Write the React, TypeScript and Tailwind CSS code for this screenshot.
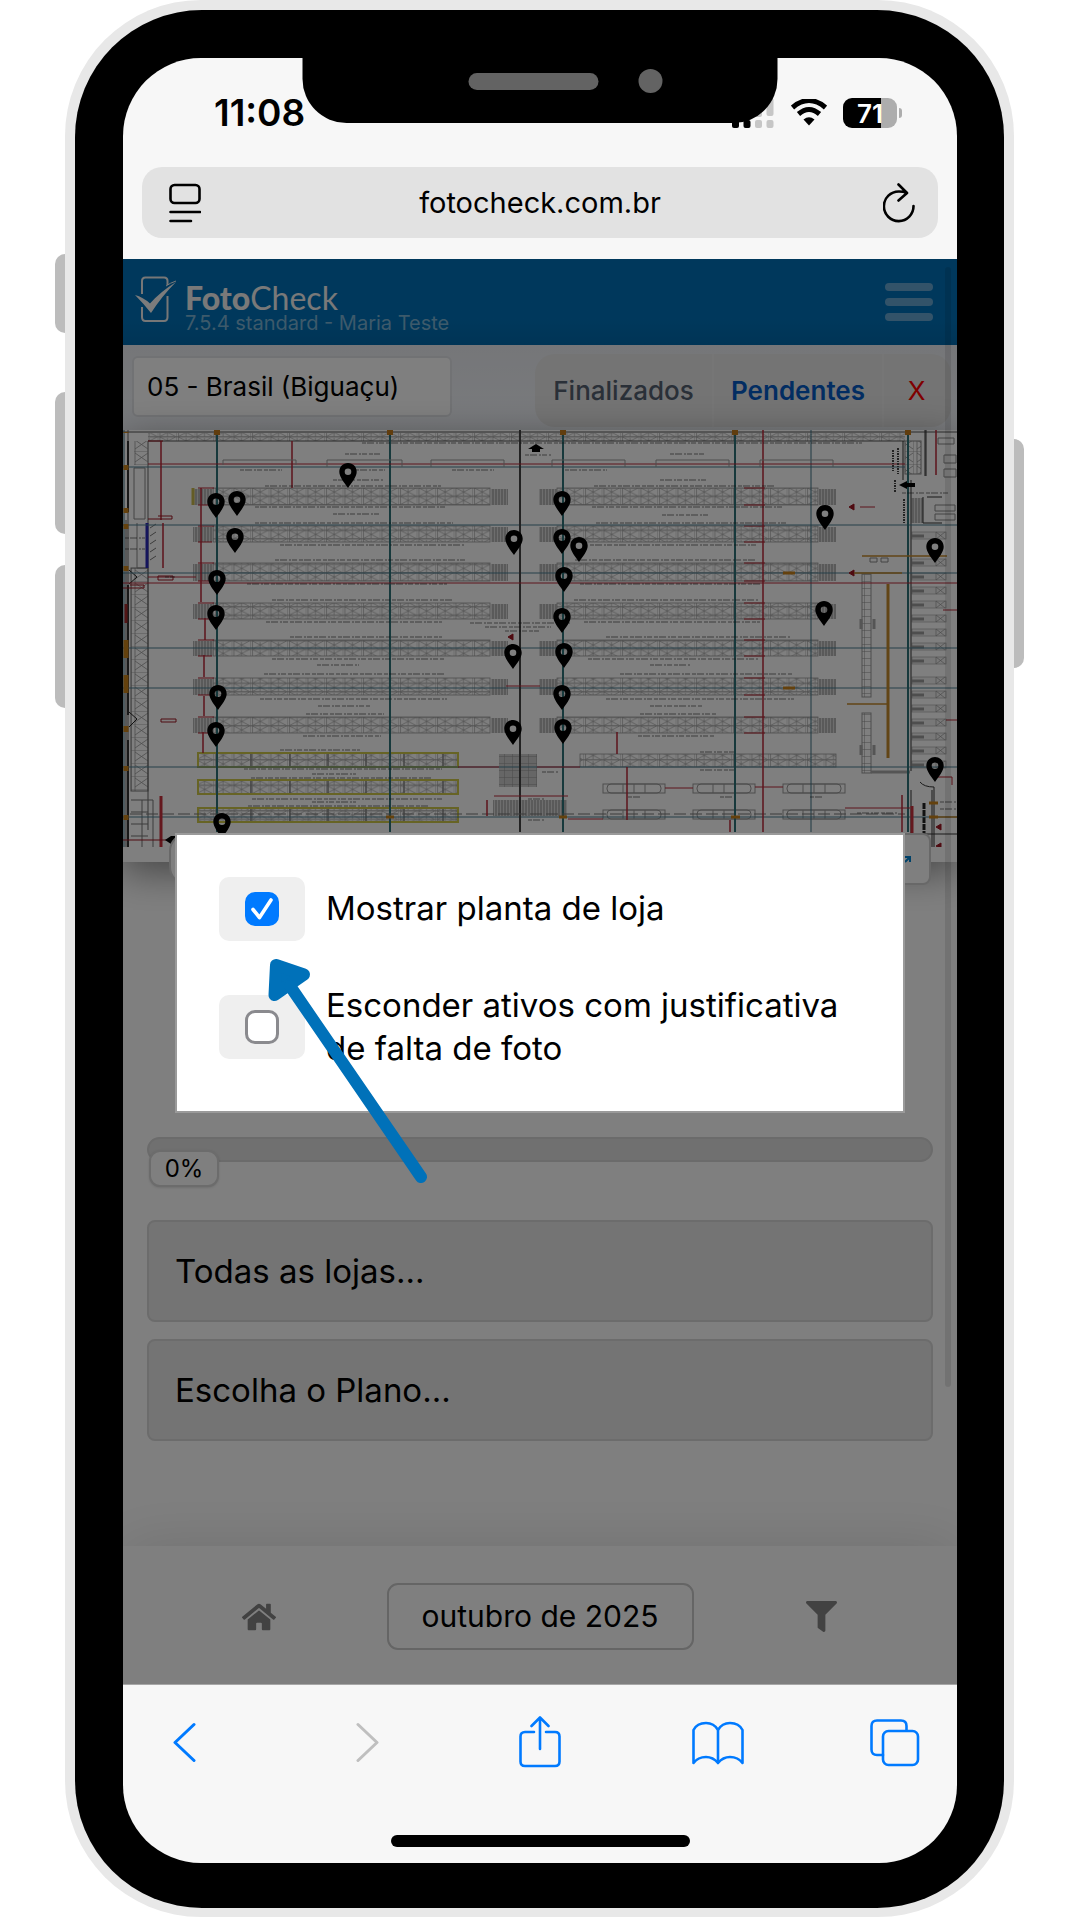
import React from "react";
import { FaFilter, FaHome } from "react-icons/fa";

const shelfRows = [
  [488, 17], [526, 16], [563, 18], [603, 16], [640, 16], [678, 17], [717, 16],
];
const yellowRows = [753, 780, 808];
const pins = [
  [348, 463], [216, 493], [237, 491], [235, 528], [217, 570], [216, 605], [218, 685], [216, 722], [222, 813],
  [514, 530], [562, 491], [562, 529], [579, 537], [564, 567], [562, 608], [513, 644], [564, 643], [562, 685],
  [513, 720], [563, 719], [825, 505], [824, 601], [935, 538], [935, 757],
];
const bays = [535, 562, 576, 590, 604, 618, 632, 646, 660, 680, 694, 708, 722, 736, 750, 764];
const captions: [number, number, number][] = [
  [345, 454, 35], [240, 470, 42], [355, 470, 30], [333, 480, 50], [265, 486, 176], [255, 507, 192], [333, 514, 46],
  [255, 523, 198], [280, 545, 184], [275, 560, 190], [247, 584, 200], [272, 600, 182], [266, 622, 176], [290, 637, 152],
  [272, 659, 172], [317, 665, 42], [264, 674, 180], [260, 699, 187], [318, 706, 52], [306, 714, 78], [303, 736, 78],
  [280, 750, 80], [244, 769, 198], [312, 774, 44], [251, 778, 180], [252, 799, 190], [312, 802, 44], [248, 806, 180],
  [362, 443, 500], [452, 470, 42], [565, 470, 42], [670, 454, 34], [660, 480, 46], [594, 486, 180], [592, 507, 190],
  [662, 515, 46], [596, 523, 190], [590, 545, 166], [575, 560, 182], [580, 584, 180], [574, 600, 184], [584, 622, 176],
  [606, 637, 184], [588, 659, 170], [650, 665, 40], [620, 674, 172], [606, 699, 188], [650, 706, 52], [640, 714, 76],
  [638, 736, 76], [700, 752, 34], [700, 770, 34], [470, 623, 100], [485, 627, 66], [505, 631, 34], [525, 455, 26],
  [542, 772, 16], [528, 799, 16], [528, 820, 16], [628, 797, 14], [720, 797, 14], [810, 797, 14], [857, 813, 40],
  [902, 493, 46], [940, 802, 16], [940, 809, 16], [125, 538, 20], [125, 549, 20], [165, 577, 10],
];

function StorePlan() {
  return (
    <svg viewBox="123 430 834 417" className="block w-full" role="img" aria-label="Planta da loja">
      <defs>
        <pattern id="shelf" width="18.5" height="8.5" patternUnits="userSpaceOnUse" x="213" y="488">
          <path d="M0 0H18.5M0 8H18.5M0 0V8.5M2.5 0V8.5M2.5 0L18 8M18 0L2.5 8M10 1V8" stroke="#a2a2a2" strokeWidth=".7" fill="none" />
        </pattern>
        <pattern id="hatch" width="3" height="6" patternUnits="userSpaceOnUse">
          <rect width="3" height="6" fill="#dcdcdc" />
          <path d="M1 0V6" stroke="#8c8c8c" strokeWidth="1" />
        </pattern>
        <pattern id="grid" width="8" height="7" patternUnits="userSpaceOnUse">
          <path d="M0 0H8M0 0V7" stroke="#888" strokeWidth=".9" fill="none" />
        </pattern>
        <pattern id="crate" width="17" height="13" patternUnits="userSpaceOnUse" x="131" y="568">
          <path d="M0 0H17M0 0V13M4 0V13M4 2L17 11M17 2L4 11" stroke="#999" strokeWidth=".8" fill="none" />
        </pattern>
      </defs>
      <rect x="123" y="430" width="834" height="417" fill="#fff" />

      {/* Outer shelving strip */}
      <rect x="148" y="433" width="757" height="8" fill="url(#shelf)" />
      <path d="M148 441H905M123 432H957" stroke="#555" strokeWidth="1" />
      <rect x="131" y="568" width="17" height="223" fill="url(#crate)" stroke="#777" />
      <path d="M148 441V830M128 430V847M126 520V847" stroke="#666" strokeWidth="1" fill="none" />
      <path d="M128 441V512M128 585V715M128 740V847" stroke="#333" strokeWidth="2" fill="none" />
      <rect x="134" y="441" width="14" height="24" fill="url(#crate)" />
      <path d="M134 468H145V519H134ZM137 523V568H147" stroke="#888" fill="none" />
      <path d="M129 570L137 577L129 584M129 712L137 719L129 727" stroke="#222" fill="none" />
      <path d="M131 800H153V847M142 800V847M131 812H148M131 824H148M131 836H148" stroke="#777" fill="none" />
      <path d="M147 523V568" stroke="#2b2bb8" strokeWidth="3" />
      <path d="M150 528l6 -4M150 536l6 -4M150 544l6 -4M150 552l6 -4M150 560l6 -4" stroke="#777" />

      {/* Aisle shelves */}
      {shelfRows.map(([y, h]) => (
        <g key={y}>
          <rect x="213" y={y} width="277" height={h} fill="url(#shelf)" stroke="#999" strokeWidth=".8" />
          <rect x="557" y={y} width="261" height={h} fill="url(#shelf)" stroke="#999" strokeWidth=".8" />
          <rect x="193" y={y + 1} width="19" height={h - 1} fill="url(#hatch)" />
          <rect x="491" y={y + 1} width="17" height={h - 1} fill="url(#hatch)" />
          <rect x="539" y={y + 1} width="18" height={h - 1} fill="url(#hatch)" />
          <rect x="818" y={y + 1} width="18" height={h - 1} fill="url(#hatch)" />
          <path d={`M744 ${y}H765M744 ${y + h}H765M198 ${y}H214M198 ${y + h}H212`} stroke="#b51f2c" strokeWidth="1" />
        </g>
      ))}
      {yellowRows.map((y) => (
        <g key={y}>
          <rect x="198" y={y} width="260" height="14" fill="url(#shelf)" stroke="#cfc94a" strokeWidth="2" />
          <path d={`M251 ${y + 1}V${y + 13}M290 ${y + 1}V${y + 13}M328 ${y + 1}V${y + 13}M366 ${y + 1}V${y + 13}M404 ${y + 1}V${y + 13}M443 ${y + 1}V${y + 13}`} stroke="#888" strokeWidth="1.5" />
        </g>
      ))}
      <path d="M193 488V505" stroke="#c9b94a" strokeWidth="3" />
      <rect x="580" y="754" width="256" height="13" fill="url(#shelf)" stroke="#999" strokeWidth=".8" />
      <rect x="499" y="754" width="38" height="33" fill="url(#grid)" />
      <rect x="499" y="754" width="38" height="33" fill="#999" opacity=".5" />
      <rect x="493" y="800" width="74" height="16" fill="url(#hatch)" />
      {[603, 693, 783].map((x) =>
        [784, 810].map((y) => (
          <g key={`${x}-${y}`} stroke="#999" fill="none">
            <rect x={x} y={y} width="62" height="9" />
            <rect x={x + 4} y={y} width="54" height="9" rx="4" />
            <path d={`M${x + 20} ${y}v9M${x + 31} ${y}v9M${x + 42} ${y}v9`} />
          </g>
        ))
      )}
      <rect x="862" y="574" width="9" height="123" fill="url(#grid)" stroke="#999" />
      <rect x="862" y="713" width="9" height="60" fill="url(#grid)" stroke="#999" />
      <path d="M861 619V629M874 619V629M861 745V755M874 745V755M871 772H910" stroke="#aaa" strokeWidth="3" />

      {/* Checkout lanes */}
      {bays.map((y) => (
        <g key={y}>
          <rect x="912" y={y - 3} width="34" height="7" fill="#f1f1f1" stroke="#aaa" strokeWidth=".7" />
          <path d={`M912 ${y + 1}H924`} stroke="#9c9c9c" strokeWidth="3" />
          <path d={`M936 ${y - 3}l9 7M945 ${y - 3}l-9 7M936 ${y - 3}v7`} stroke="#999" strokeWidth=".7" />
        </g>
      ))}
      <rect x="905" y="441" width="16" height="33" fill="url(#crate)" stroke="#888" />
      <rect x="911" y="498" width="12" height="25" fill="url(#hatch)" />
      <path d="M923 497V523H942M926 430V476M903 441V480M911 480V771M925 430V476M927 497H942" stroke="#333" fill="none" />
      <path d="M944 455h12v8h-12zM944 469h12v8h-12zM935 505h20v6h-20zM935 514h20v6h-20zM938 438h16v6h-16z" stroke="#888" fill="none" />
      <path d="M920 782q4 5 14 5M934 787V847M932 790V847M911 790V834H957" stroke="#333" fill="none" />
      <path d="M924 803V834" stroke="#222" strokeWidth="3" strokeDasharray="6 1" />
      <path d="M932 777H952V785" stroke="#b51f2c" fill="none" />

      {/* Structural axes */}
      <path d="M123 467H905M123 525H957M123 573H957M123 648H957M123 688H957M123 767H957M123 817H957" stroke="#4a7e92" strokeWidth="1" />
      <path d="M217 430V832M390 430V832M563 430V832M735 430V832M908 430V832" stroke="#2e7378" strokeWidth="2" />
      <path d="M811 430V832M124 430V847" stroke="#3b7184" strokeWidth="1" />
      <path d="M520 430V832" stroke="#444" strokeWidth="2" />
      <path d="M130 814H905" stroke="#777" strokeDasharray="12 4" />

      {/* Dimensions */}
      <path d="M148 464H905M123 583H957M148 577H196M458 767H499M537 767H580M506 686H540M494 796H568M568 819H603M845 808H910M665 788H693M755 787H783M860 507H875M943 610H957M946 720H957" stroke="#bb2838" strokeWidth="1" />
      <path d="M161 441V520M163 523V568M292 441V488M201 488V602M205 618V640M204 655V677M204 696V716M203 732V753M763 430V832M617 732V754M627 767V820M487 800V816M730 820V832M936 430V475M902 795V832" stroke="#bb2838" strokeWidth="1.5" />
      <path d="M161 796V847M912 806V834" stroke="#c9303c" strokeWidth="3" />
      <path d="M148 441H163M148 519H172V516H158M123 588H144V585H130M158 576H173V580H158ZM161 719H176V722H161ZM123 840H170" stroke="#9e1622" fill="none" />
      <path d="M849 507l5 -3v6zM849 573l5 -3v6zM508 637l5 -3v6zM936 827l5 -3v6zM936 846l5 -3v6z" stroke="#9e1622" fill="#9e1622" />
      <path d="M223 465V460H296V465M327 467V460H402V467M431 467V460H504V467M552 467V460H625V467M656 467V460H729V467M760 467V460H833V467" stroke="#999" fill="none" />

      {/* Columns and guide rails */}
      {[217, 390, 563, 735, 908].map((x) => (
        <rect key={x} x={x - 3} y="430" width="6" height="5" fill="#c27a1d" />
      ))}
      <path d="M783 573H795M783 688H795M386 817H394M559 817H567M731 817H740M929 803H938M929 817H938" stroke="#c9821b" strokeWidth="3" />
      <path d="M126 432v1M126 465v5M126 508v5M126 524v5M126 566v5M126 640v18M126 675v18M126 726v6M126 766v5M126 815v5" stroke="#c9821b" strokeWidth="5" />
      <path d="M126 604V623" stroke="#a52a2a" strokeWidth="3" />
      <path d="M888 584V758" stroke="#c58b2c" strokeWidth="3" />
      <path d="M862 556H947M854 573H902M847 704H888M938 817H957" stroke="#c58b2c" strokeWidth="1.5" />
      <path d="M870 558h7v4h-7zM881 558h7v4h-7z" stroke="#888" fill="none" />

      {/* Annotation rules */}
      {captions.map(([x, y, w], i) => (
        <path key={i} d={`M${x} ${y}h${w}`} stroke="#222" strokeWidth="1.1" strokeDasharray="4 1 7 2 2 1 5 2" opacity=".6" />
      ))}
      <path d="M893 450V471M898 448V474M895 480V492M904 499V523" stroke="#444" strokeWidth="2" strokeDasharray="2 1 1 1" />
      <path d="M528 449l8 -5 8 5h-4v3h-8v-3zM899 485l8 -4v2h8v4h-8v2zM165 840l6 -4h6v8h-6z" fill="#000" />

      {/* Location pins */}
      {pins.map(([x, y]) => (
        <path
          key={`${x}-${y}`}
          transform={`translate(${x} ${y})`}
          d="M0 0C-5 0 -8.7 3.8 -8.7 8.8C-8.7 14 -3.5 20 0 25C3.5 20 8.7 14 8.7 8.8C8.7 3.8 5 0 0 0ZM0 5.4A3.3 3.3 0 1 1 0 12A3.3 3.3 0 1 1 0 5.4Z"
          fill="#000"
          fillRule="evenodd"
        />
      ))}
    </svg>
  );
}

function StatusBar() {
  return (
    <div className="flex h-[109px] items-start justify-between pt-[32px] pr-[55px] pl-[91px]">
      <time className="text-[37px] leading-[46px] font-semibold">11:08</time>
      <div className="flex h-[46px] items-center gap-4">
        <svg width="43" height="30" viewBox="0 0 43 30" aria-label="Sinal">
          <g fill="#000"><rect x="0" y="22" width="7" height="8" rx="2" /><rect x="11.500" y="22" width="7" height="8" rx="2" /></g>
          <g fill="#c6c6c6"><rect x="23" y="22" width="7" height="8" rx="2" /><rect x="34.500" y="22" width="7" height="8" rx="2" /><rect x="23" y="8" width="7" height="11" rx="2" /><rect x="34.500" y="0" width="7" height="18" rx="2" /></g>
        </svg>
        <svg width="36" height="28" viewBox="0 0 36 28" fill="none" stroke="#000" aria-label="Wi-Fi">
          <path d="M1.500 8.500Q18 -5.500 34.500 8.500" strokeWidth="5" />
          <path d="M7.500 15Q18 6 28.500 15" strokeWidth="5" />
          <path d="M18 26.500L12.500 20.500Q18 16 23.500 20.500Z" fill="#000" stroke="none" />
        </svg>
        <div className="flex items-center gap-[2px]">
          <div className="flex h-[30px] w-[54px] items-center justify-center rounded-[9px] bg-linear-to-r from-black from-70% to-[#adadad] to-70% text-[26px] font-semibold text-white">71</div>
          <div className="h-[10px] w-[3px] rounded-r-full bg-[#adadad]" />
        </div>
      </div>
    </div>
  );
}

function AddressBar() {
  return (
    <div className="mx-[19px] mb-[21px] flex h-[71px] items-center justify-between rounded-[20px] bg-[#e2e2e2] px-[23px]">
      <button aria-label="Menu da página" className="px-[4px]">
        <svg width="32" height="40" viewBox="0 0 32 40" fill="none" stroke="#000" strokeWidth="2.600" strokeLinecap="round">
          <rect x="1.500" y="2" width="29" height="18" rx="4" />
          <path d="M1.500 29H31M1.500 38H22" />
        </svg>
      </button>
      <span className="pr-2 text-[29px]">fotocheck.com.br</span>
      <button aria-label="Recarregar">
        <svg width="32" height="40" viewBox="0 0 32 40" fill="none" stroke="#000" strokeWidth="2.600" strokeLinecap="round" strokeLinejoin="round">
          <path d="M30.500 23A14.800 14.800 0 1 1 16 8.500Q20 8.500 24 9.800M15.500 1.500L24 10L15.500 17.500" />
        </svg>
      </button>
    </div>
  );
}

function AppHeader() {
  return (
    <header className="flex h-[86px] items-start justify-between bg-linear-to-b from-[#0071b8] from-70% to-[#0069ac] pt-[17px] pr-[24px] pl-3">
      <div className="flex">
        <svg width="42" height="48" viewBox="0 0 42 48" fill="none" aria-label="Logotipo">
          <path d="M7 18V5Q7 1.500 10.500 1.500H29Q32.500 1.500 32.500 5V9M32.500 20V41Q32.500 45 29 45H10.500Q7 45 7 41V31" stroke="#eee" strokeWidth="2" />
          <path d="M0 19Q8 21 15 27.500Q25 16 41 6Q27 20 16 37Q8 27 0 19Z" fill="#f8f8f8" />
          <path d="M31 10Q35 7 41 5" stroke="#f4f4f4" strokeWidth="1" />
        </svg>
        <div className="pt-[7px] pl-2">
          <div className="font-['Lato',sans-serif] text-[32px] leading-[30px] text-[#f2f2f2]"><b className="font-black">Foto</b>Check</div>
          <div className="text-[20px] leading-[20px] text-[#7bb4d6]">7.5.4 standard - Maria Teste</div>
        </div>
      </div>
      <button aria-label="Menu" className="mt-[7px] flex w-12 flex-col gap-[7px]">
        <i className="h-2 rounded-full bg-[#66a7d2]" />
        <i className="h-2 rounded-full bg-[#66a7d2]" />
        <i className="h-2 rounded-full bg-[#66a7d2]" />
      </button>
    </header>
  );
}

function Toolbar() {
  return (
    <div className="flex h-[85px] items-start justify-between bg-linear-to-b from-[#ebedf2] to-[#f3f6fb] pr-[6px] pl-[9px]">
      <select aria-label="Loja" className="mt-[11px] h-[61px] w-[320px] appearance-none rounded-md border-2 border-[#e2e4e8] bg-white px-[13px] text-[26px]">
        <option>05 - Brasil (Biguaçu)</option>
      </select>
      <div className="mt-[9px] flex h-[73px] rounded-[20px] bg-[#e8e8e8] text-[26px]">
        <button className="w-[179px] border-r-2 border-[#ececec] font-medium text-[#546070]">Finalizados</button>
        <button className="w-[170px] border-r-2 border-[#ececec] font-semibold text-[#045ac4]">Pendentes</button>
        <button className="w-[67px] pr-[2px] text-[#ff0000]">X</button>
      </div>
    </div>
  );
}

function OptionsDialog() {
  return (
    <div role="dialog" aria-label="Opções" className="relative mx-[52px] flex w-full flex-col gap-[43px] border-2 border-[#9a9a9a] bg-white px-[42px] pt-[42px] pb-[41px] text-[33px] leading-[43px]">
      <label className="flex items-center gap-[21px]">
        <span className="grid h-16 w-[86px] shrink-0 place-items-center rounded-[10px] bg-[#efefef]">
          <input type="checkbox" defaultChecked className="peer col-start-1 row-start-1 size-[34px] appearance-none rounded-[10px] border-2 border-[#8a8a8e] bg-white checked:border-[#007aff] checked:bg-[#007aff]" />
          <svg className="pointer-events-none col-start-1 row-start-1 hidden peer-checked:block" width="22" height="22" viewBox="0 0 22 22" fill="none" stroke="#fff" strokeWidth="3.600" strokeLinecap="round" strokeLinejoin="round">
            <path d="M2 11.500L8.500 19.500L20 2" />
          </svg>
        </span>
        Mostrar planta de loja
      </label>
      <label className="flex items-center gap-[21px]">
        <span className="grid h-16 w-[86px] shrink-0 place-items-center rounded-[10px] bg-[#efefef]">
          <input type="checkbox" className="size-[34px] appearance-none rounded-[10px] border-[3px] border-[#8a8a8e] bg-white checked:bg-[#007aff]" />
        </span>
        <span>Esconder ativos com justificativa<br />de falta de foto</span>
      </label>
      <svg className="pointer-events-none absolute top-[123px] left-[91px]" width="164" height="230" viewBox="268 958 164 230" fill="#0071b9" stroke="#0071b9" strokeLinecap="round" strokeLinejoin="round" aria-hidden="true">
        <path d="M276 965L304 974.500L274.500 995Z" strokeWidth="12" />
        <path d="M290 986L421 1177" strokeWidth="12" />
      </svg>
    </div>
  );
}

function WebPage() {
  return (
    <section className="relative overflow-hidden bg-white">
      <AppHeader />
      <Toolbar />
      <div className="relative bg-white pb-[15px] shadow-[0_10px_36px_rgba(0,0,0,0.45)]">
        <StorePlan />
        <div className="absolute right-[26px] -bottom-[23px] left-[46px] flex h-[52px] items-center justify-end rounded-lg rounded-l-[18px] border-2 border-[#d0d0d0] bg-white pr-[18px]">
          <svg width="6" height="7" viewBox="0 0 6 7" aria-hidden="true"><path d="M0 1H5V6M5 1L0 6" stroke="#0083d0" strokeWidth="2" fill="none" /></svg>
        </div>
      </div>
      <div className="px-6 pt-[275px] pb-[105px]">
        <div className="relative h-[25px] rounded-full border-2 border-[#d6d6d6] bg-[#e0e0e0]">
          <span className="absolute top-[11px] left-0 flex h-[37px] w-[70px] items-center justify-center rounded-[11px] border-2 border-[#d8d8d8] bg-white text-[24px] shadow">0%</span>
        </div>
        <div className="mt-[58px] flex flex-col gap-[17px] text-[33px]">
          <select aria-label="Lojas" className="h-[102px] w-full appearance-none rounded-lg border-2 border-[#d8d8d8] bg-[#e8e8e8] px-[26px] pt-[2px]">
            <option>Todas as lojas...</option>
          </select>
          <select aria-label="Plano" className="h-[102px] w-full appearance-none rounded-lg border-2 border-[#d8d8d8] bg-[#e8e8e8] px-[26px] pt-[2px]">
            <option>Escolha o Plano...</option>
          </select>
        </div>
      </div>
      <footer className="relative flex items-center bg-white px-2 pt-[37px] pb-[34px] text-[#848484] shadow-[0_0_60px_rgba(0,0,0,0.12)]">
        <div className="flex flex-1 justify-center"><button aria-label="Início"><FaHome className="size-[34px]" /></button></div>
        <button className="h-[67px] w-[307px] rounded-[11px] border-2 border-[#cacaca] text-[30px] text-black">outubro de 2025</button>
        <div className="flex flex-1 justify-center"><button aria-label="Filtrar"><FaFilter className="size-[31px]" /></button></div>
      </footer>
      <div className="absolute top-[8px] right-[6px] bottom-[297px] w-[6px] rounded-full bg-black/10" />
      <div className="absolute inset-0 flex items-center justify-center bg-black/50 pt-[2px]">
        <OptionsDialog />
      </div>
    </section>
  );
}

function BrowserToolbar() {
  return (
    <nav className="border-t border-[#a8a8a8] pt-[31px] pb-4">
      <div className="flex items-center justify-between px-[36px] text-[#007aff]">
        <button aria-label="Voltar" className="flex w-[52px] justify-center">
          <svg width="24" height="52" viewBox="0 0 24 52" fill="none" stroke="currentColor" strokeWidth="3" strokeLinecap="round" strokeLinejoin="round"><path d="M21 8.500L2 26.500L21 44.500" /></svg>
        </button>
        <button aria-label="Avançar" disabled className="flex w-[52px] justify-end pr-[10px] text-[#bfbfbf]">
          <svg width="24" height="52" viewBox="0 0 24 52" fill="none" stroke="currentColor" strokeWidth="3" strokeLinecap="round" strokeLinejoin="round"><path d="M3 8.500L22 26.500L3 44.500" /></svg>
        </button>
        <button aria-label="Compartilhar" className="flex w-[52px] justify-center">
          <svg width="42" height="52" viewBox="0 0 42 52" fill="none" stroke="currentColor" strokeWidth="2.600" strokeLinecap="round" strokeLinejoin="round"><path d="M15 16H6Q1.500 16 1.500 20.500V45.500Q1.500 50 6 50H36Q40.500 50 40.500 45.500V20.500Q40.500 16 36 16H27M21 33V2M12.500 10L21 1.500L29.500 10" /></svg>
        </button>
        <button aria-label="Favoritos" className="flex w-[52px] justify-center">
          <svg width="52" height="52" viewBox="0 0 52 52" fill="none" stroke="currentColor" strokeWidth="2.600" strokeLinejoin="round"><path d="M26 14Q22 7 14 7Q5 7 1.500 14V47Q6 41 14 41Q21 41 26 47Q31 41 38 41Q46 41 50.500 47V14Q47 7 38 7Q30 7 26 14V47" /></svg>
        </button>
        <button aria-label="Abas" className="flex w-[52px] justify-center">
          <svg width="50" height="52" viewBox="0 0 50 52" fill="none" stroke="currentColor" strokeWidth="2.600" strokeLinecap="round"><rect x="13" y="15" width="35" height="34" rx="5.500" /><path d="M13 39H7Q1.500 39 1.500 33.500V10Q1.500 4.500 7 4.500H31Q36.500 4.500 36.500 10V14" /></svg>
        </button>
      </div>
      <div className="mx-auto mt-[67px] h-3 w-[299px] rounded-full bg-black" />
    </nav>
  );
}

export default function App() {
  return (
    <main className="min-h-screen bg-white pr-[66px] pl-[65px] font-['Inter','Liberation_Sans',sans-serif] text-black">
      <div className="relative">
        <i className="absolute top-[254px] -left-[10px] h-[79px] w-[10px] rounded-l-[10px] bg-[#bcbcbc]" />
        <i className="absolute top-[392px] -left-[10px] h-[142px] w-[10px] rounded-l-[10px] bg-[#bcbcbc]" />
        <i className="absolute top-[565px] -left-[10px] h-[143px] w-[10px] rounded-l-[10px] bg-[#bcbcbc]" />
        <i className="absolute top-[439px] -right-[10px] h-[229px] w-[10px] rounded-r-[10px] bg-[#bcbcbc]" />
        <div className="rounded-[136px] bg-[#e8e8e8] px-[10px] pt-[10px] pb-[9px]">
          <div className="rounded-[127px] bg-black pt-12 pr-[47px] pb-[45px] pl-12">
            <div className="relative overflow-hidden rounded-[78px] bg-[#f7f7f7]">
              <StatusBar />
              <AddressBar />
              <WebPage />
              <BrowserToolbar />
              <div className="absolute top-0 left-1/2 flex h-[65px] w-[475px] -translate-x-1/2 items-start justify-end gap-[40px] rounded-b-[44px] bg-black pt-[11px] pr-[115px]">
                <span className="mt-1 h-[17px] w-[130px] rounded-full bg-[#636363]" />
                <span className="size-6 rounded-full bg-[#636363]" />
              </div>
            </div>
          </div>
        </div>
      </div>
    </main>
  );
}
